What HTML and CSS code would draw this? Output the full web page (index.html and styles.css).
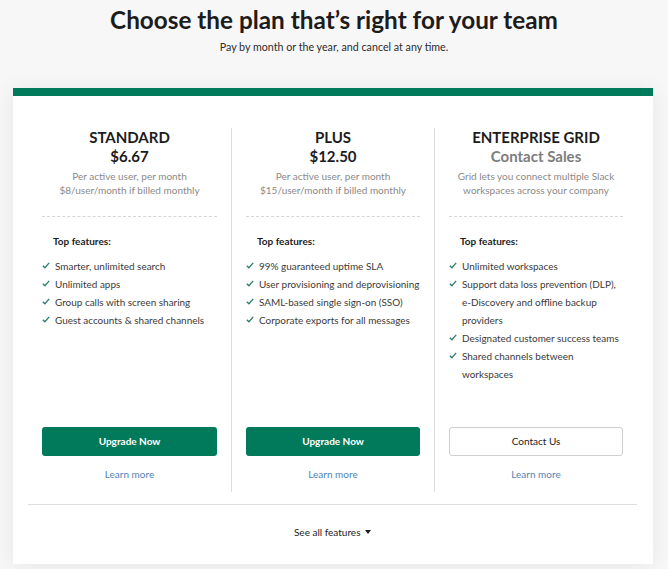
FILE: index.html
```html
<!DOCTYPE html>
<html lang="en">
<head>
<meta charset="utf-8">
<title>Pricing</title>
<link rel="stylesheet" href="styles.css">
</head>
<body>
<header class="intro">
  <h1 class="title">Choose the plan that’s right for your team</h1>
  <p class="subtitle">Pay by month or the year, and cancel at any time.</p>
</header>
<section class="card">
  <div class="plans">
    <div class="plan">
      <div class="plan-head">
        <h2 class="plan-name">STANDARD</h2>
        <div class="plan-price">$6.67</div>
        <p class="plan-note">Per active user, per month<br>$8/user/month if billed monthly</p>
      </div>
      <div class="features">
        <h3 class="features-title">Top features:</h3>
        <ul class="feature-list">
          <li><svg class="check" viewBox="0 0 8 7"><polyline points="0.8,3.8 2.9,5.8 7.2,0.9"/></svg><span>Smarter, unlimited search</span></li>
          <li><svg class="check" viewBox="0 0 8 7"><polyline points="0.8,3.8 2.9,5.8 7.2,0.9"/></svg><span>Unlimited apps</span></li>
          <li><svg class="check" viewBox="0 0 8 7"><polyline points="0.8,3.8 2.9,5.8 7.2,0.9"/></svg><span>Group calls with screen sharing</span></li>
          <li><svg class="check" viewBox="0 0 8 7"><polyline points="0.8,3.8 2.9,5.8 7.2,0.9"/></svg><span>Guest accounts &amp; shared channels</span></li>
        </ul>
      </div>
      <div class="plan-foot">
        <a class="btn btn-primary" href="#">Upgrade Now</a>
        <a class="learn" href="#">Learn more</a>
      </div>
    </div>
    <div class="plan">
      <div class="plan-head">
        <h2 class="plan-name">PLUS</h2>
        <div class="plan-price">$12.50</div>
        <p class="plan-note">Per active user, per month<br>$15/user/month if billed monthly</p>
      </div>
      <div class="features">
        <h3 class="features-title">Top features:</h3>
        <ul class="feature-list">
          <li><svg class="check" viewBox="0 0 8 7"><polyline points="0.8,3.8 2.9,5.8 7.2,0.9"/></svg><span>99% guaranteed uptime SLA</span></li>
          <li><svg class="check" viewBox="0 0 8 7"><polyline points="0.8,3.8 2.9,5.8 7.2,0.9"/></svg><span>User provisioning and deprovisioning</span></li>
          <li><svg class="check" viewBox="0 0 8 7"><polyline points="0.8,3.8 2.9,5.8 7.2,0.9"/></svg><span>SAML-based single sign-on (SSO)</span></li>
          <li><svg class="check" viewBox="0 0 8 7"><polyline points="0.8,3.8 2.9,5.8 7.2,0.9"/></svg><span>Corporate exports for all messages</span></li>
        </ul>
      </div>
      <div class="plan-foot">
        <a class="btn btn-primary" href="#">Upgrade Now</a>
        <a class="learn" href="#">Learn more</a>
      </div>
    </div>
    <div class="plan">
      <div class="plan-head">
        <h2 class="plan-name">ENTERPRISE GRID</h2>
        <div class="plan-price plan-price-muted">Contact Sales</div>
        <p class="plan-note">Grid lets you connect multiple Slack<br>workspaces across your company</p>
      </div>
      <div class="features">
        <h3 class="features-title">Top features:</h3>
        <ul class="feature-list">
          <li><svg class="check" viewBox="0 0 8 7"><polyline points="0.8,3.8 2.9,5.8 7.2,0.9"/></svg><span>Unlimited workspaces</span></li>
          <li><svg class="check" viewBox="0 0 8 7"><polyline points="0.8,3.8 2.9,5.8 7.2,0.9"/></svg><span>Support data loss prevention (DLP), e-Discovery and offline backup providers</span></li>
          <li><svg class="check" viewBox="0 0 8 7"><polyline points="0.8,3.8 2.9,5.8 7.2,0.9"/></svg><span>Designated customer success teams</span></li>
          <li><svg class="check" viewBox="0 0 8 7"><polyline points="0.8,3.8 2.9,5.8 7.2,0.9"/></svg><span>Shared channels between workspaces</span></li>
        </ul>
      </div>
      <div class="plan-foot">
        <a class="btn btn-outline" href="#">Contact Us</a>
        <a class="learn" href="#">Learn more</a>
      </div>
    </div>
  </div>
  <div class="see-all"><a href="#">See all features <span class="caret"></span></a></div>
</section>
</body>
</html>
```
FILE: styles.css
```css
* { box-sizing: border-box; }
html, body { margin: 0; padding: 0; }
body {
  background: #f7f7f7;
  font-family: Lato, "Open Sans", sans-serif;
  color: #1d1c1d;
  width: 668px;
  height: 569px;
  overflow: hidden;
}
.intro {
  text-align: center;
  padding-top: 6px;
}
.title {
  margin: 0;
  font-size: 24.3px;
  line-height: 28px;
  font-weight: 700;
  color: #1d1c1d;
}
.subtitle {
  margin: 6px 0 0;
  font-size: 10.7px;
  line-height: 14px;
  color: #2c2c2c;
}
.card {
  margin: 34px 0 0 13px;
  width: 640px;
  height: 476px;
  background: #fff;
  border-top: 8px solid #007a5a;
  box-shadow: 0 2px 22px rgba(0, 0, 0, 0.07);
  padding: 32px 16px 0 15px;
}
.plans {
  display: grid;
  grid-template-columns: repeat(3, 1fr);
  border-bottom: 1px solid #dedede;
  padding-bottom: 12px;
}
.plan {
  display: flex;
  flex-direction: column;
  padding: 0 14px 11px;
  height: 364px;
}
.plan + .plan { border-left: 1px solid #dddddd; }
.plan-head {
  text-align: center;
  border-bottom: 1px dashed #d6d6d6;
  padding-bottom: 19px;
}
.plan-name {
  margin: 0;
  font-size: 15px;
  line-height: 19px;
  font-weight: 700;
  color: #1d1c1d;
}
.plan-price {
  font-size: 15px;
  line-height: 19px;
  font-weight: 700;
  color: #1d1c1d;
}
.plan-price-muted { color: #7d7d7d; }
.plan-note {
  margin: 3px 0 0;
  font-size: 10px;
  line-height: 14px;
  color: #8a8a8a;
}
.features { padding-top: 17px; }
.features-title {
  margin: 0 0 9px 11px;
  font-size: 10px;
  line-height: 14px;
  font-weight: 700;
  color: #1d1c1d;
}
.feature-list {
  list-style: none;
  margin: 0;
  padding: 0;
}
.feature-list li {
  display: flex;
  align-items: flex-start;
  font-size: 9.95px;
  line-height: 18px;
  color: #3b3a3b;
}
.check {
  flex: none;
  width: 8px;
  height: 7px;
  margin: 5px 5px 0 0;
  fill: none;
  stroke: #2b7d6f;
  stroke-width: 1.3;
}
.plan-foot {
  margin-top: auto;
  display: flex;
  flex-direction: column;
  align-items: stretch;
  text-align: center;
}
.btn {
  display: block;
  height: 29px;
  line-height: 27px;
  border-radius: 3px;
  font-size: 10px;
  font-weight: 700;
  text-decoration: none;
  border: 1px solid transparent;
}
.btn-primary {
  background: #007a5a;
  color: #fff;
}
.btn-outline {
  background: #fff;
  border-color: #cfcfcf;
  color: #1d1c1d;
  font-weight: 400;
}
.learn {
  margin-top: 11px;
  font-size: 10px;
  line-height: 14px;
  color: #4f84b8;
  text-decoration: none;
}
.see-all {
  text-align: center;
  padding-top: 15px;
}
.see-all a {
  font-size: 10px;
  line-height: 14px;
  color: #1d1c1d;
  text-decoration: none;
}
.caret {
  display: inline-block;
  width: 0;
  height: 0;
  border-left: 3.5px solid transparent;
  border-right: 3.5px solid transparent;
  border-top: 4px solid #1d1c1d;
  vertical-align: 2px;
  margin-left: 2px;
}
```
